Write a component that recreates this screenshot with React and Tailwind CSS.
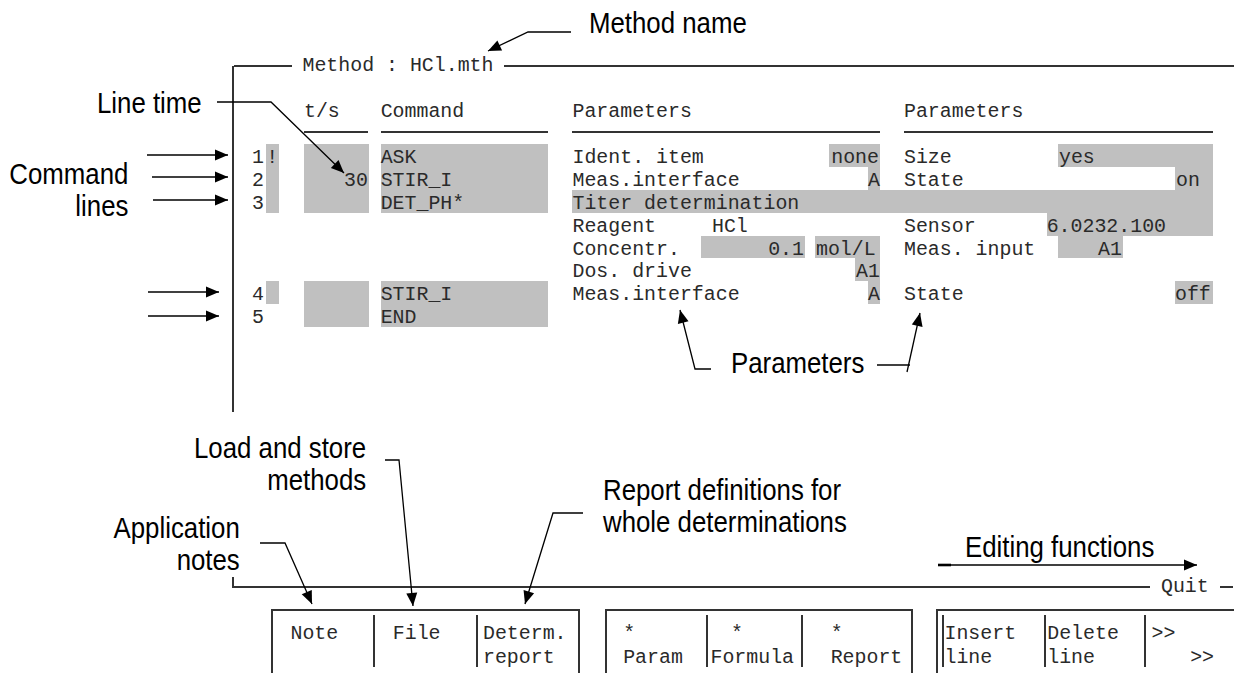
import React from "react";

const MONO = "font-['Liberation_Mono','Courier_New',monospace] text-[19.9px] text-[#2a2a2a]";
const SANS = "font-['Liberation_Sans',Arial,sans-serif] text-[30px] leading-[32px] text-black whitespace-nowrap";
const G = "bg-[#c0c0c0]";

function head(x1, y1, x2, y2, len = 13, hw = 5.5) {
  const dx = x2 - x1, dy = y2 - y1, d = Math.hypot(dx, dy);
  const ux = dx / d, uy = dy / d;
  const bx = x2 - ux * len, by = y2 - uy * len;
  return `${x2},${y2} ${bx - uy * hw},${by + ux * hw} ${bx + uy * hw},${by - ux * hw}`;
}

function Leader({ pts }) {
  const n = pts.length;
  const [x1, y1] = pts[n - 2];
  const [x2, y2] = pts[n - 1];
  return (
    <g>
      <polyline points={pts.map((p) => p.join(",")).join(" ")} fill="none" stroke="#000" strokeWidth="1.3" />
      <polygon points={head(x1, y1, x2, y2)} fill="#000" />
    </g>
  );
}

function Row({ num = "", bang = "", bangGrey = false, ts = "", tsGrey = false, cmd = "", cmdGrey = false, p1 = null, p2 = null, span = null }) {
  return (
    <div className="flex h-[22.9px] leading-[27px] whitespace-pre">
      <div className="w-[18px] shrink-0" />
      <div className="w-[13.7px] shrink-0">{num}</div>
      <div className={"w-[13.3px] shrink-0 text-center " + (bangGrey ? G : "")}>{bang}</div>
      <div className="w-[25px] shrink-0" />
      <div className={"w-[65px] shrink-0 text-right pr-[1px] " + (tsGrey ? G : "")}>{ts}</div>
      <div className="w-[11.7px] shrink-0" />
      <div className={"w-[167px] shrink-0 " + (cmdGrey ? G : "")}>{cmd}</div>
      <div className="w-[24.8px] shrink-0" />
      {span ? (
        <div className={"w-[640.5px] shrink-0 " + G}>{span}</div>
      ) : (
        <>
          <div className="w-[307.5px] shrink-0 flex">{p1}</div>
          <div className="w-[24px] shrink-0" />
          <div className="w-[309px] shrink-0 flex">{p2}</div>
        </>
      )}
    </div>
  );
}

function Screen() {
  return (
    <div className={"ml-[232px] mt-[66px] w-[1002px] h-[346px] shrink-0 border-l-2 border-[#333] flex flex-col " + MONO}>
      <div className="-mt-[13px] h-[26px] flex items-center leading-[26px]">
        <div className="w-[58px] h-0 shrink-0 border-t-2 border-[#333]" />
        <span className="px-[10.5px] whitespace-pre">Method : HCl.mth</span>
        <div className="flex-1 h-0 border-t-2 border-[#333]" />
      </div>

      <div className="mt-[18.9px] flex h-[22.9px] leading-[27px] whitespace-pre">
        <div className="w-[70px] shrink-0" />
        <div className="w-[76.7px] shrink-0">t/s</div>
        <div className="w-[191.8px] shrink-0">Command</div>
        <div className="w-[331.5px] shrink-0">Parameters</div>
        <div className="w-[309px] shrink-0">Parameters</div>
      </div>

      <div className="mt-[10.7px] flex h-[2px]">
        <div className="w-[70px] shrink-0" />
        <div className="w-[64px] shrink-0 bg-[#333]" />
        <div className="w-[12.7px] shrink-0" />
        <div className="w-[167px] shrink-0 bg-[#333]" />
        <div className="w-[24.8px] shrink-0" />
        <div className="w-[307.5px] shrink-0 bg-[#333]" />
        <div className="w-[24px] shrink-0" />
        <div className="w-[309px] shrink-0 bg-[#333]" />
      </div>

      <div className="mt-[10.5px] flex flex-col">
        <Row
          num="1" bang="!" bangGrey tsGrey cmd="ASK" cmdGrey
          p1={<><span>Ident. item</span><span className={"ml-auto w-[51.3px] text-right pr-[1px] " + G}>none</span></>}
          p2={<><span className="w-[154px] shrink-0">Size</span><span className={"flex-1 pl-[1px] " + G}>yes</span></>}
        />
        <Row
          num="2" bangGrey ts="30" tsGrey cmd="STIR_I" cmdGrey
          p1={<><span>Meas.interface</span><span className={"ml-auto w-[11.7px] flex justify-end " + G}>A</span></>}
          p2={<><span>State</span><span className={"ml-auto w-[38px] pl-[1px] " + G}>on</span></>}
        />
        <Row num="3" bangGrey tsGrey cmd="DET_PH*" cmdGrey span="Titer determination" />
        <Row
          p1={<><span className="w-[139.5px] shrink-0">Reagent</span><span>HCl</span></>}
          p2={<><span className="w-[142.7px] shrink-0">Sensor</span><span className={"flex-1 " + G}>6.0232.100</span></>}
        />
        <Row
          p1={<><span className="w-[128.5px] shrink-0">Concentr.</span><span className={"w-[104px] shrink-0 text-right pr-[1px] " + G}>0.1</span><span className={"ml-[10px] w-[65px] shrink-0 pl-[1px] " + G}>mol/L</span></>}
          p2={<><span className="w-[154px] shrink-0">Meas. input</span><span className={"w-[65px] shrink-0 text-right pr-[1px] " + G}>A1</span></>}
        />
        <Row
          p1={<><span>Dos. drive</span><span className={"ml-auto w-[25px] text-right " + G}>A1</span></>}
        />
        <Row
          num="4" bangGrey tsGrey cmd="STIR_I" cmdGrey
          p1={<><span>Meas.interface</span><span className={"ml-auto w-[11.7px] flex justify-end " + G}>A</span></>}
          p2={<><span>State</span><span className={"ml-auto w-[38px] " + G}>off</span></>}
        />
        <Row num="5" tsGrey cmd="END" cmdGrey />
      </div>
    </div>
  );
}

function QuitRow() {
  return (
    <div className={"ml-[232px] mt-[164px] h-[22px] w-[1002px] shrink-0 flex leading-[22px] " + MONO}>
      <div className="mt-[1px] h-[11px] w-[918px] shrink-0 border-l-2 border-b-2 border-[#333]" />
      <span className="ml-[11px]">Quit</span>
      <div className="ml-[11px] mt-[10px] h-0 w-[13px] border-t-2 border-[#333]" />
    </div>
  );
}

function Buttons() {
  const col = "mt-[4px] h-[52px] pt-[7.35px] leading-[23.5px] whitespace-pre";
  return (
    <div className={"ml-[270.7px] mt-[11px] flex h-[70px] w-[963.3px] shrink-0 " + MONO}>
      <div className="w-[309.6px] shrink-0 flex border-t-2 border-l-2 border-r-2 border-[#333]">
        <div className={"w-[100.3px] shrink-0 pl-[17.8px] " + col}>Note</div>
        <div className={"w-[102.7px] shrink-0 border-l-2 border-[#333] pl-[17.8px] " + col}>File</div>
        <div className={"flex-1 border-l-2 border-[#333] pl-[5.3px] " + col}>
          <div>Determ.</div>
          <div>report</div>
        </div>
      </div>

      <div className="ml-[24.4px] w-[308px] shrink-0 flex border-t-2 border-l-2 border-r-2 border-[#333]">
        <div className={"w-[99px] shrink-0 pl-[16.5px] " + col}>
          <div>*</div>
          <div>Param</div>
        </div>
        <div className={"w-[95px] shrink-0 border-l-2 border-[#333] " + col}>
          <div className="pl-[23.3px]">*</div>
          <div className="pl-[2.8px]">Formula</div>
        </div>
        <div className={"flex-1 border-l-2 border-[#333] pl-[28px] " + col}>
          <div>*</div>
          <div>Report</div>
        </div>
      </div>

      <div className="ml-[23.6px] flex-1 flex border-t-2 border-l-2 border-[#333]">
        <div className="w-[3.7px] shrink-0" />
        <div className={"w-[102px] shrink-0 border-l-2 border-[#333] pl-[0.5px] " + col}>
          <div>Insert</div>
          <div>line</div>
        </div>
        <div className={"w-[100px] shrink-0 border-l-2 border-[#333] pl-[1.3px] " + col}>
          <div>Delete</div>
          <div>line</div>
        </div>
        <div className={"flex-1 border-l-2 border-[#333] " + col}>
          <div className="pl-[5.5px]">&gt;&gt;</div>
          <div className="pl-[44.2px]">&gt;&gt;</div>
        </div>
      </div>
    </div>
  );
}

function Labels() {
  return (
    <>
      <div className={"absolute left-[589px] top-[7px] origin-left scale-x-[0.86] " + SANS}>Method name</div>
      <div className={"absolute left-[97px] top-[87px] origin-left scale-x-[0.86] " + SANS}>Line time</div>
      <div className={"absolute right-[1106px] top-[158px] text-right origin-right scale-x-[0.86] " + SANS}>
        <div>Command</div>
        <div>lines</div>
      </div>
      <div className={"absolute left-[731px] top-[347px] origin-left scale-x-[0.86] " + SANS}>Parameters</div>
      <div className={"absolute right-[868px] top-[432px] text-right origin-right scale-x-[0.86] " + SANS}>
        <div>Load and store</div>
        <div>methods</div>
      </div>
      <div className={"absolute right-[994px] top-[512px] text-right origin-right scale-x-[0.86] " + SANS}>
        <div>Application</div>
        <div>notes</div>
      </div>
      <div className={"absolute left-[603px] top-[474px] origin-left scale-x-[0.86] " + SANS}>
        <div>Report definitions for</div>
        <div>whole determinations</div>
      </div>
      <div className={"absolute left-[965px] top-[531px] origin-left scale-x-[0.86] " + SANS}>Editing functions</div>
    </>
  );
}

export default function App() {
  return (
    <div className="relative w-[1234px] h-[673px] overflow-hidden bg-white text-[#1a1a1a] flex flex-col items-start">
      <Screen />
      <QuitRow />
      <Buttons />
      <Labels />
      <svg className="absolute left-0 top-0 pointer-events-none" width="1234" height="673" viewBox="0 0 1234 673">
        <Leader pts={[[571, 32], [528, 32], [488, 51]]} />
        <Leader pts={[[217, 102], [271, 102], [344, 173]]} />
        <Leader pts={[[147, 155], [228, 155]]} />
        <Leader pts={[[152, 177], [228, 177]]} />
        <Leader pts={[[153, 200], [228, 200]]} />
        <Leader pts={[[148, 292], [219, 292]]} />
        <Leader pts={[[148, 316], [219, 316]]} />
        <Leader pts={[[711, 369], [695, 369], [680, 310]]} />
        <line x1="877" y1="365" x2="910" y2="365" stroke="#000" strokeWidth="1.3" />
        <Leader pts={[[907, 372], [920, 313]]} />
        <Leader pts={[[385, 460], [399, 460], [413, 606]]} />
        <Leader pts={[[260, 543], [285, 543], [312, 604]]} />
        <Leader pts={[[583, 513], [553, 513], [525, 604]]} />
        <Leader pts={[[938, 565], [1197, 565]]} />
        <line x1="938" y1="565" x2="951" y2="565" stroke="#000" strokeWidth="2.6" />
      </svg>
    </div>
  );
}
